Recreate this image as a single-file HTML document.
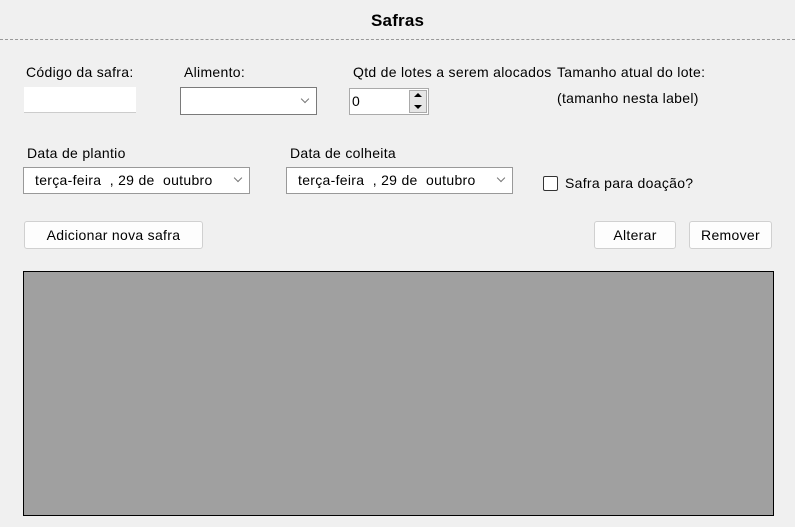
<!DOCTYPE html>
<html><head><style>
*{margin:0;padding:0;box-sizing:border-box}
body{width:795px;height:527px;background:#f0f0f0;font-family:"Liberation Sans",sans-serif;font-size:14px;letter-spacing:0.3px;color:#000;position:relative;overflow:hidden}
.a{position:absolute;white-space:nowrap}
.box{position:absolute;background:#fff;border:1px solid #7a7a7a}
.btn{position:absolute;background:#fdfdfd;border:1px solid #d0d0d0;border-radius:3px;text-align:center;line-height:26px;font-size:14px}
.chev{position:absolute;width:6px;height:6px;border-right:1px solid #777;border-bottom:1px solid #777;transform:rotate(45deg)}
</style></head><body>
<div class="a" style="left:371px;top:11px;font-size:17px;font-weight:bold;letter-spacing:0.2px">Safras</div>
<div class="a" style="left:0;top:39px;width:795px;border-top:1px dashed #999"></div>

<div class="a" style="left:26px;top:64px">Código da safra:</div>
<div class="box" style="left:24px;top:87px;width:112px;height:26px;border:none;border-bottom:1px solid #ccc"></div>

<div class="a" style="left:184px;top:64px">Alimento:</div>
<div class="box" style="left:180px;top:87px;width:137px;height:28px"></div>
<div class="chev" style="left:302px;top:96px"></div>

<div class="a" style="left:353px;top:64px">Qtd de lotes a serem alocados</div>
<div class="box" style="left:349px;top:88px;width:80px;height:27px;border-color:#aaa"><span style="position:absolute;left:2px;top:4px">0</span>
<div style="position:absolute;left:59px;top:1px;width:18px;height:23px;background:#e6e6e6;border:1px solid #aaa"></div>
<div style="position:absolute;left:64px;top:4px;border:4px solid transparent;border-bottom:4px solid #000;border-top:0"></div>
<div style="position:absolute;left:64px;top:16px;border:4px solid transparent;border-top:4px solid #000;border-bottom:0"></div>
</div>

<div class="a" style="left:556px;top:64px;background:#f0f0f0;padding-left:1px">Tamanho atual do lote:</div>
<div class="a" style="left:557px;top:90px">(tamanho nesta label)</div>

<div class="a" style="left:27px;top:145px">Data de plantio</div>
<div class="box" style="left:23px;top:167px;width:227px;height:27px;border-color:#999"><span style="position:absolute;left:11px;top:4px">terça-feira &nbsp;, 29 de &nbsp;outubro</span></div>
<div class="chev" style="left:235px;top:175px"></div>

<div class="a" style="left:290px;top:145px">Data de colheita</div>
<div class="box" style="left:286px;top:167px;width:227px;height:27px;border-color:#999"><span style="position:absolute;left:11px;top:4px">terça-feira &nbsp;, 29 de &nbsp;outubro</span></div>
<div class="chev" style="left:498px;top:175px"></div>

<div class="a" style="left:543px;top:176px;width:15px;height:15px;border:1px solid #333;border-radius:2px;background:#fff"></div>
<div class="a" style="left:565px;top:175px">Safra para doação?</div>

<div class="btn" style="left:24px;top:221px;width:179px;height:28px">Adicionar nova safra</div>
<div class="btn" style="left:594px;top:221px;width:82px;height:28px">Alterar</div>
<div class="btn" style="left:689px;top:221px;width:83px;height:28px">Remover</div>

<div class="a" style="left:23px;top:271px;width:751px;height:245px;background:#a0a0a0;border:1px solid #000"></div>
</body></html>
